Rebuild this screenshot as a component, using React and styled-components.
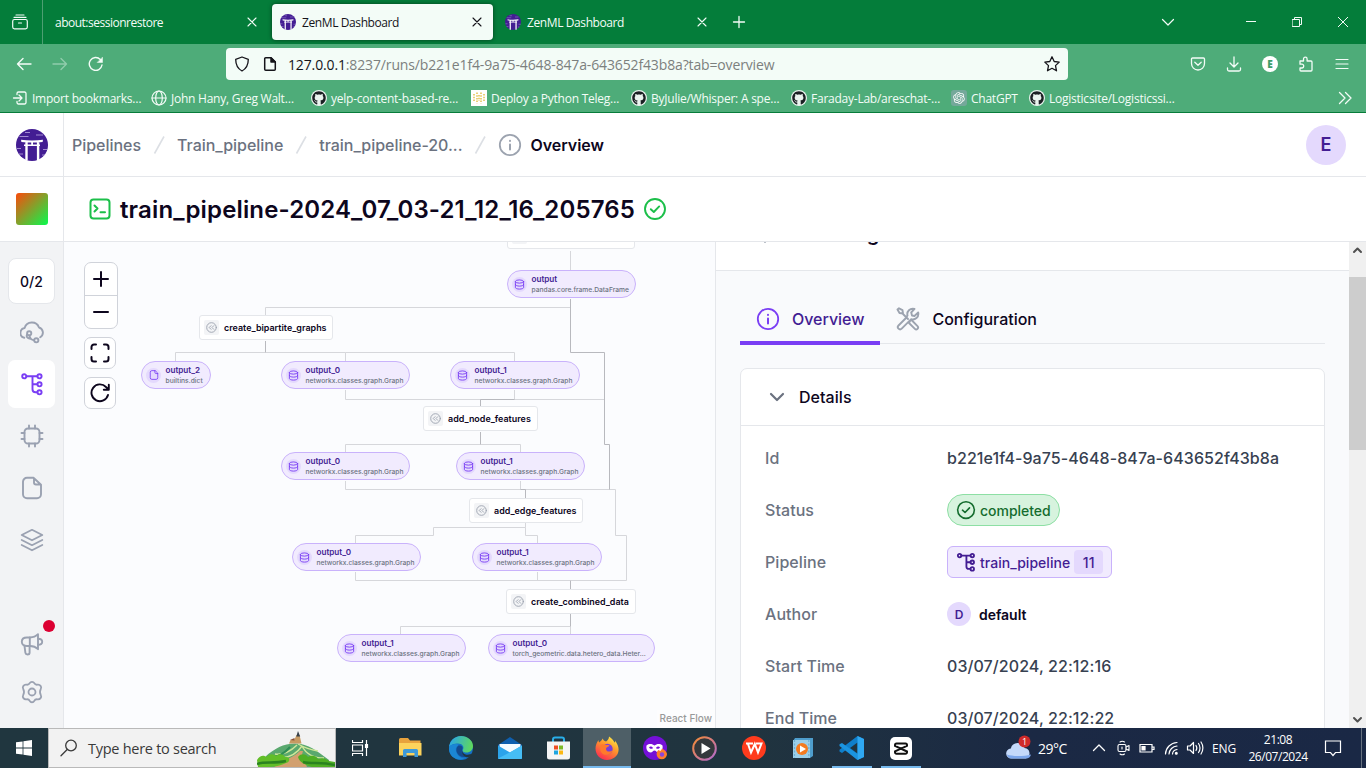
import React from "react";
import styled, { createGlobalStyle, css } from "styled-components";
import { FaGithub } from "react-icons/fa";
import { RiOpenaiFill } from "react-icons/ri";

const GlobalStyle = createGlobalStyle`
  *, *::before, *::after { box-sizing: border-box; }
  body { margin: 0; overflow: hidden; }
  svg { display: block; flex: none; }
`;

const c = {
  line: "#e5e7eb",
  ink: "#0d061d",
  muted: "#6b7280",
  icon: "#9ca3af",
  purple: "#7a3ef4",
  deep: "#431d93",
  lilac: "#e4d9fd",
  pale: "#f1ebfe",
  lilacLine: "#c9b2fb",
  green: "#1cbf4a",
};

const Screen = styled.div`
  width: 1366px;
  height: 768px;
  display: flex;
  flex-direction: column;
  overflow: hidden;
  font-family: Inter, "Liberation Sans", sans-serif;
`;

/* ---------- Browser chrome ---------- */

const Chrome = styled.header`
  flex: none;
  height: 113px;
  background: #4eac79;
  border-bottom: 1px solid #077c3a;
  font-family: "Open Sans", "Noto Sans", sans-serif;
  font-size: 12px;
  color: #f3fcf7;
`;

const TabStrip = styled.div`
  display: flex;
  align-items: center;
  height: 44px;
  background: #047d3a;
`;

const ArchiveButton = styled.div`
  width: 43px;
  height: 44px;
  display: flex;
  align-items: center;
  padding-left: 12px;
  border-right: 1px solid #4d9f72;
`;

const Tab = styled.div`
  display: flex;
  align-items: center;
  gap: 6px;
  width: ${(p) => p.$width}px;
  height: 36px;
  padding: 0 8px 0 ${(p) => (p.$plain ? 12 : 8)}px;
  margin-right: 4px;
  border-radius: 4px;
  letter-spacing: ${(p) => (p.$plain ? -0.5 : -0.4)}px;
  ${(p) =>
    p.$active &&
    css`
      background: #f3fcf7;
      color: #15141a;
      box-shadow: 0 0 4px rgba(0, 0, 0, 0.5);
    `}
`;

const TabTitle = styled.span`
  flex: 1;
  padding-top: 2px;
  line-height: 18px;
  white-space: nowrap;
`;

const WindowCell = styled.div`
  display: flex;
  align-items: center;
  justify-content: center;
  width: ${(p) => p.$width}px;
  height: 44px;
  margin-right: ${(p) => p.$after || 0}px;
`;

const Spacer = styled.div`
  flex: 1;
`;

const Toolbar = styled.div`
  display: flex;
  align-items: center;
  gap: 4px;
  height: 40px;
  padding-left: 8px;
`;

const ToolButton = styled.div`
  display: flex;
  align-items: center;
  justify-content: center;
  width: 32px;
  height: 32px;
  opacity: ${(p) => (p.$dim ? 0.4 : 1)};
`;

const UrlField = styled.div`
  display: flex;
  align-items: center;
  gap: 12px;
  width: 842px;
  height: 32px;
  margin: 0 110px;
  padding: 0 8px;
  border-radius: 4px;
  background: #f3fcf7;
  color: #15141a;
`;

const Url = styled.span`
  flex: 1;
  margin-left: -2px;
  padding-top: 1px;
  font-size: 14px;
  letter-spacing: -0.14px;
  white-space: nowrap;
  color: #7c807e;
`;

const Host = styled.span`
  color: #15141a;
`;

const AccountDot = styled.span`
  width: 16px;
  height: 16px;
  border-radius: 50%;
  background: #fff;
  color: #3f9d6b;
  font-size: 10px;
  font-weight: 800;
  line-height: 16px;
  text-align: center;
`;

const Bookmarks = styled.div`
  display: flex;
  align-items: center;
  height: 28px;
  padding-left: 12px;
`;

const Bookmark = styled.div`
  display: flex;
  align-items: center;
  gap: 4px;
  width: ${(p) => p.$width}px;
  letter-spacing: -0.24px;
  white-space: nowrap;
`;

const GithubBadge = styled.span`
  display: flex;
  align-items: center;
  justify-content: center;
  width: 16px;
  height: 16px;
  border-radius: 50%;
  background: #eaf3ee;
  color: #1b1f23;
  font-size: 14px;
`;

const GptBadge = styled(GithubBadge)`
  border-radius: 3px;
  background: #74a89a;
  color: #fff;
`;

const PythonBadge = styled(GithubBadge)`
  border-radius: 0;
  background: #fff;
`;

/* ---------- Application frame ---------- */

const Frame = styled.div`
  flex: 1;
  min-height: 0;
  display: flex;
  background: #fff;
`;

const Sidebar = styled.aside`
  flex: none;
  width: 64px;
  display: flex;
  flex-direction: column;
  border-right: 1px solid ${c.line};
  background: #f2f3f5;
`;

const BrandCell = styled.div`
  flex: none;
  height: ${(p) => p.$height}px;
  padding: 16px 0 0 16px;
  background: #fff;
  border-bottom: 1px solid ${c.line};
`;

const Workspace = styled.div`
  width: 32px;
  height: 32px;
  border-radius: 3px;
  background: linear-gradient(135deg, #fc4a0b 0%, #07fb4d 100%);
`;

const Nav = styled.nav`
  flex: 1;
  display: flex;
  flex-direction: column;
  gap: 4px;
  padding: 16px 8px 12px;
`;

const Progress = styled.div`
  height: 46px;
  border: 1px solid ${c.line};
  border-radius: 8px;
  background: #fff;
  color: ${c.ink};
  font-size: 14px;
  font-weight: 500;
  line-height: 46px;
  text-align: center;
`;

const NavItem = styled.div`
  position: relative;
  display: flex;
  align-items: center;
  height: 48px;
  padding-left: 12px;
  border-radius: 7px;
  background: ${(p) => (p.$active ? "#fff" : "transparent")};
  color: ${(p) => (p.$active ? c.purple : "#9aa1b1")};
`;

const Footer = styled.div`
  margin-top: auto;
`;

const NewsDot = styled.span`
  position: absolute;
  top: 0;
  right: 0;
  width: 12px;
  height: 12px;
  border-radius: 50%;
  background: #dc0032;
`;

const Main = styled.main`
  flex: 1;
  min-width: 0;
  display: flex;
  flex-direction: column;
`;

const Breadcrumbs = styled.div`
  flex: none;
  display: flex;
  align-items: center;
  gap: 8px;
  height: 64px;
  padding: 0 20px 0 8px;
  border-bottom: 1px solid ${c.line};
  font-size: 16px;
  font-weight: 500;
  letter-spacing: -0.03px;
  color: ${c.muted};
`;

const Crumb = styled.span`
  white-space: nowrap;
  ${(p) =>
    p.$current &&
    css`
      color: ${c.ink};
      font-weight: 600;
    `}
`;

const Avatar = styled.span`
  display: inline-flex;
  align-items: center;
  justify-content: center;
  width: ${(p) => p.$size}px;
  height: ${(p) => p.$size}px;
  border-radius: 50%;
  background: ${c.lilac};
  color: ${c.deep};
  font-size: ${(p) => p.$font}px;
  font-weight: 600;
`;

const TitleBar = styled.div`
  flex: none;
  display: flex;
  align-items: center;
  gap: 8px;
  height: 65px;
  padding-left: 24px;
  border-bottom: 1px solid ${c.line};
`;

const RunTitle = styled.h1`
  margin: 0;
  padding-top: 2px;
  font-size: 24px;
  font-weight: 600;
  line-height: 30px;
  letter-spacing: 0.145px;
  color: ${c.ink};
`;

const Content = styled.div`
  flex: 1;
  min-height: 0;
  display: flex;
`;

/* ---------- Pipeline graph ---------- */

const Canvas = styled.section`
  position: relative;
  flex: none;
  width: 651px;
  overflow: hidden;
  background: #fbfcfe;
`;

const Edges = styled.svg`
  position: absolute;
  inset: 0;
`;

const placed = css`
  position: absolute;
  left: ${(p) => p.$x - 64}px;
  top: ${(p) => p.$y - 242}px;
  width: ${(p) => p.$w}px;
  display: flex;
  align-items: center;
  white-space: nowrap;
`;

const Step = styled.div`
  ${placed}
  height: 25px;
  padding-left: 4px;
  gap: 5px;
  border: 1px solid ${c.line};
  border-radius: 3px;
  background: #fff;
  color: ${c.ink};
  font-size: 8.95px;
  font-weight: 600;
`;

const StepIcon = styled.span`
  display: flex;
  align-items: center;
  justify-content: center;
  width: 15px;
  height: 15px;
  border-radius: 2px;
  background: #f3f4f6;
  color: ${c.icon};
`;

const Artifact = styled.div`
  ${placed}
  height: 28px;
  padding: 0 2px 0 4px;
  gap: 5px;
  border: 1px solid ${c.lilacLine};
  border-radius: 14px;
  background: ${c.pale};
`;

const ArtifactIcon = styled.span`
  display: flex;
  align-items: center;
  justify-content: center;
  flex: none;
  width: 15px;
  height: 15px;
  border-radius: 50%;
  background: ${c.lilac};
  color: ${c.purple};
`;

const ArtifactText = styled.span`
  min-width: 0;
  margin-left: -0.5px;
  color: ${c.muted};
  font-size: 6.7px;
  font-weight: 500;
  line-height: 10px;
`;

const ArtifactName = styled.span`
  display: block;
  color: ${c.deep};
  font-size: 8.15px;
  font-weight: 600;
  line-height: 11px;
`;

const Controls = styled.div`
  position: absolute;
  left: 20px;
  top: 20px;
  display: flex;
  flex-direction: column;
  gap: 8px;
  color: ${c.ink};
`;

const ControlGroup = styled.div`
  width: ${(p) => p.$width}px;
  border: 1px solid #d0d3da;
  border-radius: 7px;
  background: #fff;
  overflow: hidden;
`;

const Control = styled.div`
  display: flex;
  align-items: center;
  justify-content: center;
  height: ${(p) => p.$height}px;
  & + & {
    border-top: 1px solid #d0d3da;
  }
`;

const Attribution = styled.div`
  position: absolute;
  right: 0;
  bottom: 0;
  padding: 2px 3px 4px;
  background: #fdfdfe;
  color: #999;
  font-size: 10px;
  font-weight: 500;
  line-height: 12px;
`;

/* ---------- Run details ---------- */

const Panel = styled.section`
  flex: 1;
  min-width: 0;
  display: flex;
  flex-direction: column;
  overflow: hidden;
  border-left: 1px solid ${c.line};
  background: #f9fafc;
`;

const PanelHeader = styled.div`
  flex: none;
  display: flex;
  align-items: flex-end;
  gap: 14px;
  height: 29px;
  padding: 0 0 22px 37px;
  overflow: hidden;
  border-bottom: 1px solid ${c.line};
  background: #fff;
  color: ${c.icon};
`;

const PanelTitle = styled.h2`
  margin: 0;
  color: ${c.ink};
  font-size: 20px;
  font-weight: 600;
  line-height: 28px;
  letter-spacing: -0.1px;
`;

const PanelBody = styled.div`
  padding: 24px 24px 0;
`;

const TabRow = styled.div`
  display: flex;
  height: 49px;
  border-bottom: 1px solid ${c.line};
`;

const PanelTab = styled.div`
  display: flex;
  align-items: center;
  gap: 12px;
  flex: none;
  height: 50px;
  padding: 2px 16px 0;
  font-size: 16px;
  font-weight: 500;
  letter-spacing: -0.02px;
  color: ${(p) => (p.$active ? c.deep : c.ink)};
  border-bottom: 4px solid ${(p) => (p.$active ? c.purple : "transparent")};
  svg {
    color: ${(p) => (p.$active ? c.purple : c.icon)};
  }
`;

const Card = styled.div`
  height: 400px;
  margin-top: 24px;
  border: 1px solid ${c.line};
  border-radius: 7px;
  background: #fff;
`;

const CardHeader = styled.div`
  display: flex;
  align-items: center;
  gap: 10px;
  height: 57px;
  padding-left: 24px;
  border-bottom: 1px solid ${c.line};
  color: ${c.ink};
  font-size: 16px;
  font-weight: 500;
  letter-spacing: 0.05px;
  svg {
    color: ${c.muted};
  }
`;

const Rows = styled.dl`
  margin: 0;
  padding: 6px 24px;
`;

const Row = styled.div`
  display: flex;
  align-items: center;
  height: 52px;
  font-size: 16px;
  font-weight: 500;
`;

const Key = styled.dt`
  width: 182px;
  letter-spacing: 0.06px;
  color: ${c.muted};
`;

const Value = styled.dd`
  display: flex;
  align-items: center;
  margin: 0;
  color: #374151;
  letter-spacing: 0.08px;
  white-space: nowrap;
`;

const StatusPill = styled.span`
  display: flex;
  align-items: center;
  gap: 4px;
  height: 32px;
  padding: 0 8px;
  border: 1px solid #8ddfa4;
  border-radius: 16px;
  background: #d7f3de;
  color: #146c2e;
  font-size: 14px;
  font-weight: 500;
  letter-spacing: -0.02px;
`;

const PipelinePill = styled(StatusPill)`
  border-color: ${c.lilacLine};
  border-radius: 6px;
  background: ${c.pale};
  color: ${c.deep};
  letter-spacing: 0.03px;
`;

const Version = styled.span`
  width: 29px;
  height: 24px;
  border-radius: 4px;
  background: ${c.lilac};
  line-height: 25px;
  text-align: center;
`;

const AuthorName = styled.span`
  margin-left: 8px;
  color: ${c.ink};
  font-size: 14px;
  font-weight: 600;
  letter-spacing: -0.03px;
`;

const Scrollbar = styled.div`
  flex: none;
  width: 17px;
  display: flex;
  flex-direction: column;
  align-items: center;
  background: #f0f0f0;
  color: #505050;
`;

const ScrollArrow = styled.div`
  display: flex;
  align-items: center;
  justify-content: center;
  height: 17px;
  width: 17px;
`;

const Thumb = styled.div`
  width: 17px;
  height: 173px;
  margin: 18px 0 auto;
  background: #cdcdcd;
`;

/* ---------- Taskbar ---------- */

const Taskbar = styled.footer`
  flex: none;
  display: flex;
  height: 40px;
  background: linear-gradient(90deg, #20363f 0%, #20343f 55%, #1b2944 75%, #1a2845 100%);
  color: #fff;
  font-family: "Open Sans", "Noto Sans", sans-serif;
  font-size: 12px;
`;

const StartButton = styled.div`
  display: flex;
  align-items: center;
  justify-content: center;
  width: 48px;
`;

const SearchBox = styled.div`
  display: flex;
  align-items: center;
  width: 288px;
  padding-left: 11px;
  border: 1px solid #b9b9b9;
  background: #f2f2f2;
  color: #3a3a3a;
  font-size: 14.5px;
  letter-spacing: -0.27px;
  white-space: nowrap;
`;

const SearchText = styled.span`
  flex: 1;
  margin-left: 10px;
`;

const TaskButton = styled.div`
  display: flex;
  align-items: center;
  justify-content: center;
  width: ${(p) => p.$width || 49}px;
  height: 40px;
`;

const RunningButton = styled(TaskButton)`
  width: 40px;
  margin: 0 4.5px;
  border-bottom: 2px solid #76b9ed;
  padding-top: 2px;
`;

const FocusedButton = styled(TaskButton)`
  width: 48px;
  background: #4e5f67;
  border-bottom: 2px solid #76b9ed;
  padding-top: 2px;
`;

const Tray = styled.div`
  display: flex;
  align-items: center;
  margin-left: auto;
`;

const TrayItem = styled.div`
  display: flex;
  align-items: center;
  justify-content: center;
  width: ${(p) => p.$width}px;
  height: 40px;
  letter-spacing: -0.2px;
  white-space: nowrap;
`;

const Temperature = styled.span`
  width: 50px;
  padding-left: 6px;
  font-size: 14px;
  letter-spacing: -0.5px;
`;

const Clock = styled.div`
  width: 82px;
  text-align: center;
  line-height: 17px;
  letter-spacing: -0.45px;
`;

const DesktopEdge = styled.div`
  width: 5px;
  height: 40px;
  margin-left: 14px;
  border-left: 1px solid #66717f;
`;

/* ---------- Icons ---------- */

const Line = ({ size = 24, box = 24, width = 1.8, children, ...rest }) => (
  <svg
    width={size}
    height={size}
    viewBox={`0 0 ${box} ${box}`}
    fill="none"
    stroke="currentColor"
    strokeWidth={width}
    strokeLinecap="round"
    strokeLinejoin="round"
    {...rest}
  >
    {children}
  </svg>
);

const Torii = ({ size }) => (
  <svg width={size} height={size} viewBox="0 0 32 32">
    <circle cx="16" cy="16" r="16" fill="#431d93" />
    <path d="M5 10.700c7 .9 15 .9 22 0l-.4 2.300c-7 .8-14.200.8-21.200 0zM8 15.500h16v1.500H8zM9.300 13h2.400v18.300H9.300zM20.900 13h2.400v18.300h-2.400zM15.200 13h1.800v2.500h-1.800z" fill="#fff" />
    <path d="M9 3.500h5M3.500 7.500h9M20 6h7M1 19.500h4M27 20.500h4.500M3 25h4M26 26h3" stroke="#cbbcee" strokeWidth=".7" />
  </svg>
);

const Close = () => (
  <Line size={16} box={16} width={1.1}>
    <path d="M4 4l8 8M12 4l-8 8" />
  </Line>
);

const PipelineIcon = ({ size, width = 1.9 }) => (
  <Line size={size} width={width}>
    <circle cx="4.300" cy="4.300" r="2.100" />
    <circle cx="19.500" cy="4.300" r="2.100" />
    <circle cx="19.500" cy="12.300" r="2.100" />
    <circle cx="19.500" cy="20.300" r="2.100" />
    <path d="M6.400 4.300h11M12.500 4.300v13a3 3 0 0 0 3 3h1.900M12.500 12.300h4.900" />
  </Line>
);

const CheckCircle = ({ size, ...rest }) => (
  <Line size={size} width={1.9} {...rest}>
    <circle cx="12" cy="12" r="10" />
    <path d="M7.800 12.200l3 2.800 5.400-5.600" />
  </Line>
);

const InfoIcon = (props) => (
  <Line {...props}>
    <circle cx="12" cy="12" r="10.200" />
    <path d="M12 11.500v5M12 7.700v.2" strokeWidth="2" />
  </Line>
);

const Slash = () => (
  <svg width="20" height="20" viewBox="0 0 20 20">
    <path d="M15 1.500L5.500 18.500" stroke="#dcdfe4" strokeWidth="1.600" />
  </svg>
);

const DatabaseIcon = () => (
  <Line size={11} width={2}>
    <ellipse cx="12" cy="5.500" rx="9" ry="3.500" />
    <path d="M3 5.500v13c0 2 4 3.500 9 3.500s9-1.500 9-3.500v-13M3 12c0 2 4 3.500 9 3.500s9-1.500 9-3.500" />
  </Line>
);

const FileIcon = ({ size, width }) => (
  <Line size={size} width={width}>
    <path d="M14 1.500H7a4 4 0 0 0-4 4v13a4 4 0 0 0 4 4h10a4 4 0 0 0 4-4V8.500zM14 1.500v4a3 3 0 0 0 3 3h4" />
  </Line>
);

const RewindIcon = () => (
  <Line size={11} width={2}>
    <circle cx="12" cy="12" r="10.500" />
    <path d="M11 8l-4 4 4 4M17 8l-4 4 4 4" />
  </Line>
);

const navIcons = {
  stacks: (
    <Line width={1.900}>
      <path d="M4.300 17.800A5 5 0 0 1 4.600 8 7.600 7.600 0 0 1 19 7.500a5.300 5.300 0 0 1 1.200 9.700" />
      <circle cx="9.200" cy="13.300" r="2.100" />
      <circle cx="16.300" cy="20.300" r="2.100" />
      <path d="M7 14.500c-1 2 0 3.500 3.500 4.300M9.500 15.500c.3 2.500 1.500 4.500 4.600 4.800" />
    </Line>
  ),
  pipelines: <PipelineIcon size={24} />,
  models: (
    <Line width={1.900}>
      <rect x="4.500" y="4.500" width="15" height="15" rx="3.500" />
      <path d="M9 4.500V1.500M15 4.500V1.500M9 22.500v-3M15 22.500v-3M4.500 9h-3M4.500 15h-3M22.500 9h-3M22.500 15h-3" />
    </Line>
  ),
  artifacts: (
    <Line width={1.9}>
      <path d="M13.500 1.800H7a4 4 0 0 0-4 4v12.400a4 4 0 0 0 4 4h10a4 4 0 0 0 4-4V8.800zM14 2.200v4.300a2 2 0 0 0 2 2h4.500" />
    </Line>
  ),
  components: (
    <Line width={1.8}>
      <path d="M12 1.800L22.300 7 12 12.300 1.700 7zM1.700 12L12 17.200 22.300 12M1.700 17L12 22.300 22.300 17" />
    </Line>
  ),
};

const MegaphoneIcon = () => (
  <Line width={1.9}>
    <path d="M7 5.500h3c3 0 6-1.200 8-3.300v15c-2-2-5-3.200-8-3.200H7C4 14 1.800 12.500 1.800 9.800S4 5.500 7 5.500z" />
    <path d="M18 6.800c2.500 0 4.200 1.200 4.200 3s-1.700 3-4.200 3M9.800 5.500v8.500M4.500 13.800l.9 7c.3 2.200 4 2.200 4.200 0V14" />
  </Line>
);

const SettingsIcon = () => (
  <Line width={1.8}>
    <circle cx="12" cy="12" r="3.500" />
    <path d="M9.700 3.200c1-1.900 3.600-1.900 4.600 0 .6 1.200 1.900 1.700 3.200 1.500 2.600-.4 4.500 2 3.300 4.200-.8 1.500-.8 4.700 0 6.200 1.200 2.200-.7 4.600-3.300 4.200-1.300-.2-2.600.3-3.200 1.500-1 1.900-3.600 1.900-4.600 0-.6-1.200-1.900-1.700-3.200-1.500-2.600.4-4.500-2-3.300-4.200.8-1.500.8-4.700 0-6.200C2 6.700 3.900 4.300 6.500 4.700c1.300.2 2.600-.3 3.200-1.500z" />
  </Line>
);

const ToolsIcon = () => (
  <Line width={1.9}>
    <path d="M6 6l6 6M1.500 2.500L3 1.300l3.500 1.800L7 6.500 3.500 6zM14 14l1.500-1 6 6.200a1.800 1.800 0 0 1-2.600 2.600L13 16zM9.500 11.500l-7 7a2.200 2.200 0 0 0 3.200 3.200l9.500-9.500c3.800 1 8-1.700 7-6.700L18.500 9 16 8.500 15.200 5.500l3.300-3.600c-4.500-1.100-8 2.500-7 6.600z" />
  </Line>
);

/* ---------- Taskbar application icons ---------- */

const Hills = () => (
  <svg width="78" height="38" viewBox="0 0 78 38">
    <path d="M8 28C18 19 26 15 38 14.500c14 0 22 8 34 16.500v7H8z" fill="#5aa86e" />
    <path d="M18 25c8 1 16-3 22-9M25 29c9-1 16-6 20-12M45 17c4 8 12 12 22 12M41 15c7 4 14 6 20 7" stroke="#cfe69a" strokeWidth="1.400" fill="none" />
    <path d="M12 28c8 1 14-2 21-10" stroke="#2f8d56" strokeWidth="2" fill="none" />
    <path d="M43 22c-4 4-9 6-14 9l-12 7h33c-2-6-7-8-4-16z" fill="#d2a06f" />
    <path d="M0 31c3-5 7-5 9-3 4-4 8-3 10-1 3-3 8-2 9 1 5-1 6 5 1 6-8 4-14 4-28 4z" fill="#62be28" />
    <path d="M41 28c3-4 8-3 10 0 3-2 8-2 10 2 5-2 9 0 11 2l6 1v5H55c-7-2-13-5-14-10z" fill="#4fae24" />
    <path d="M0 35c9-3 16 0 29-3M46 33c8 2 18 0 32 3" stroke="#2b8320" strokeWidth="2.500" fill="none" />
    <path d="M32 14.500l1.500-3.500 4-.5 2-4.500h3l2 8.500z" fill="#c79a62" />
    <path d="M39.300 7.500L41 2l2.200 5.500z" fill="#36404a" />
    <path d="M33 11l4.500-2v2.500z" fill="#8a4f35" />
  </svg>
);

const FolderApp = () => (
  <svg width="23" height="22" viewBox="0 0 23 22">
    <path d="M0 2.500A1.500 1.500 0 0 1 1.500 1H9l2 2.500h10.500v6H0z" fill="#e8a33d" />
    <path d="M0 6h22.500v12.500H0z" fill="#fcd35c" />
    <path d="M4 20v-6.500A1.500 1.500 0 0 1 5.500 12h12a1.500 1.500 0 0 1 1.500 1.500V20h-3.500v-4h-8v4z" fill="#3f9ad8" />
  </svg>
);

const EdgeApp = () => (
  <svg width="24" height="24" viewBox="0 0 24 24">
    <defs>
      <linearGradient id="edgeTop" x1="0" x2="1" y1=".3" y2=".5">
        <stop offset="0" stopColor="#2aa6e8" />
        <stop offset="1" stopColor="#5fd85c" />
      </linearGradient>
    </defs>
    <circle cx="12" cy="12" r="12" fill="#1470c4" />
    <path d="M0 11.500C.5 5 5.500 0 12 0s12 4.500 12 10c0 4-3 6.500-6.500 6.500-3 0-4.500-1.200-3.500-3 1.500-3-1-6-5-6S1 9 0 11.500z" fill="url(#edgeTop)" />
    <path d="M7 12c-1 5 3 10.500 9 10.500C7 26-1.500 19 .2 11 2.500 7.500 8 7.500 10 9c-1.500.5-2.500 1.500-3 3z" fill="#1b86d4" />
    <path d="M9.500 9.500C5 13 8 21 15 21c3 0 5.500-1 7-3-5 2-9 .5-9-3.500 0-1 .6-1.700.6-2.700 0-1.500-1.600-2.800-4.100-2.300z" fill="#134a8e" />
    <path d="M13.200 14c0 4.500 5 6 9.500 3.700 1.500-1 2.300.5 1.300 1.800L20 21c-4 1-7.500-2.500-6.800-7z" fill="#20363f" />
  </svg>
);

const MailApp = () => (
  <svg width="24" height="24" viewBox="0 0 24 24">
    <path d="M0 9L12 1l12 8v3H0z" fill="#0f5fae" />
    <path d="M1.500 8h21v10h-21z" fill="#f5fbff" />
    <path d="M0 9.500l12 7 12-7V22a1 1 0 0 1-1 1H1a1 1 0 0 1-1-1z" fill="#2ba3ea" />
    <path d="M0 22.500L13 15.700 24 9.500V22a1 1 0 0 1-1 1H1z" fill="#46bdf5" />
  </svg>
);

const StoreApp = () => (
  <svg width="23" height="24" viewBox="0 0 23 24">
    <path d="M6 7V3.500A2 2 0 0 1 8 1.500h7a2 2 0 0 1 2 2V7" fill="none" stroke="#29aee8" strokeWidth="2" />
    <path d="M0 5.500h23V21a2.500 2.500 0 0 1-2.500 2.500h-18A2.500 2.500 0 0 1 0 21z" fill="#f5f5f5" />
    <path d="M7 9.500h4v4H7z" fill="#f04e23" />
    <path d="M12 9.500h4v4h-4z" fill="#7eba28" />
    <path d="M7 14.500h4v4H7z" fill="#1ea5e0" />
    <path d="M12 14.500h4v4h-4z" fill="#fcb813" />
  </svg>
);

const FirefoxShape = ({ size }) => (
  <svg width={size} height={size} viewBox="0 0 24 24">
    <defs>
      <linearGradient id="fox" x1=".8" y1="0" x2=".2" y2="1">
        <stop offset="0" stopColor="#fff14a" />
        <stop offset=".4" stopColor="#ff9a2b" />
        <stop offset="1" stopColor="#fb2354" />
      </linearGradient>
    </defs>
    <path d="M14 .5c3 2 4.500 4 5.500 6 1-.3.500-2 .500-2 3 4 4.500 8 3 12.500C21.500 21 17 24 12 24 5.500 24 .5 19 .5 12.500.5 9 2 6 3.500 4c0 1 .3 2 .8 2.500C5.500 5 7 4.500 7.500 2.500 8.500 4 9 5 11 5.500c1.500-1 3-2.500 3-5z" fill="url(#fox)" />
    <circle cx="12.500" cy="13" r="5.200" fill="#7a3fd6" />
    <path d="M5 9.500c2-2 4-1.500 6-.5 1.500 0 3 0 3.500.5-1 1.500-3.500 1.500-3.500 3.500 0 3 4.500 3.500 6.500 1-1 5.500-9.500 7-12 1z" fill="#ff7a2b" />
  </svg>
);

const PrivateApp = () => (
  <svg width="25" height="24" viewBox="0 0 25 24">
    <circle cx="12" cy="12" r="12" fill="#7410d8" />
    <path d="M3.500 9.500c3-2.500 6-1.500 8 0 2-1.500 5-2.500 8 0 .8 4-1.500 7-4 7-2 0-2.500-2-4-2s-2 2-4 2c-2.500 0-4.800-3-4-7z" fill="#fff" />
    <path d="M6 11.500c1-1.500 3-1.200 4 .5-1 1.200-3 1.200-4-.5zM13 12c1-1.700 3-2 4-.5-1 1.700-3 1.700-4 .5z" fill="#7410d8" />
    <path d="M19 12.500c1 1 4.500 2 5 5.500a5.200 5.200 0 0 1-10.400 0c0-1.500.8-3 1.800-4 .8.8 2 .8 2.600.5z" fill="#ff7b2c" />
    <circle cx="19" cy="18.500" r="2.200" fill="#8b45dc" />
  </svg>
);

const PlayerApp = () => (
  <svg width="25" height="25" viewBox="0 0 25 25">
    <defs>
      <linearGradient id="ring" x1="0" y1="0" x2="1" y2="1">
        <stop offset="0" stopColor="#f58b32" />
        <stop offset="1" stopColor="#b16ad0" />
      </linearGradient>
    </defs>
    <circle cx="12.500" cy="12.500" r="11.300" fill="#33383c" stroke="url(#ring)" strokeWidth="2" />
    <path d="M9.500 7l9 5.500-9 5.500z" fill="#fff" />
  </svg>
);

const WpsApp = () => (
  <svg width="24" height="24" viewBox="0 0 24 24">
    <circle cx="12" cy="12" r="12" fill="#ff3b1d" />
    <path d="M4 7.500h7M6 8l3 8.500 3.800-8.500 3.200 8.500L19.500 7.500H14" fill="none" stroke="#fff" strokeWidth="2" />
  </svg>
);

const MoviesApp = () => (
  <svg width="22" height="22" viewBox="0 0 22 22">
    <path d="M3 1h18v18l-3 2V4H1z" fill="#4e9dcc" />
    <path d="M1 3h17v18H1z" fill="#9ccfe9" />
    <path d="M2.500 3v18M16.800 3v18" stroke="#6fb0d4" strokeWidth="1.200" strokeDasharray="2 1.500" />
    <circle cx="10" cy="12" r="6" fill="#f47b20" />
    <path d="M8 8.500l6 3.500-6 3.500z" fill="#fff" />
  </svg>
);

const CodeApp = () => (
  <svg width="25" height="24" viewBox="0 0 25 24">
    <path d="M18.500 0L25 3v18l-6.500 3L7.500 13.500 3 17l-2.500-1.500v-1.700L18.500 0z" fill="#0f7fcb" />
    <path d="M18.500 24L.5 10V8.200L3 7l15.500 11z" fill="#1b94e0" />
    <path d="M18.500 6.500v11L11 12z" fill="#20343f" />
    <path d="M18.500 0L25 3v18l-6.500 3z" fill="#2fa8f2" />
  </svg>
);

const CapcutApp = () => (
  <svg width="22" height="23" viewBox="0 0 22 23">
    <rect width="22" height="23" rx="5" fill="#fff" />
    <path d="M17 9.500V8a1.500 1.500 0 0 0-1.500-1.500h-9A1.500 1.500 0 0 0 5 8v.8l12 5.700v.8a1.500 1.500 0 0 1-1.500 1.500h-9A1.500 1.500 0 0 1 5 15.300v-1l12-5.500" fill="none" stroke="#111" strokeWidth="2" />
  </svg>
);

const WeatherIcon = () => (
  <svg width="26" height="26" viewBox="0 0 26 26">
    <path d="M5.500 23.500a5 5 0 0 1-.7-10A7.200 7.200 0 0 1 18.600 13a5.400 5.400 0 0 1 1.200 10.500z" fill="#c4d9fa" />
    <path d="M5.500 23.500a5 5 0 0 1-4.500-4c5 2 17 2 24 0a5.400 5.400 0 0 1-5 4z" fill="#7ca7ec" />
    <circle cx="18.500" cy="6.500" r="6" fill="#cf2a2a" />
    <text x="18.500" y="9.800" fontSize="9" textAnchor="middle" fill="#fff">1</text>
  </svg>
);

/* ---------- Data ---------- */

const bookmarks = [
  [139, "import", "Import bookmarks…"],
  [160, "globe", "John Hany, Greg Walt…"],
  [160, "github", "yelp-content-based-re…"],
  [160, "python", "Deploy a Python Teleg…"],
  [160, "github", "ByJulie/Whisper: A spe…"],
  [160, "github", "Faraday-Lab/areschat-…"],
  [78, "gpt", "ChatGPT"],
  [160, "github", "Logisticsite/Logisticssi…"],
];

const bookmarkIcon = {
  import: (
    <Line size={16} box={16} width={1.3}>
      <path d="M1.500 8h8M7 5l3 3-3 3M5 4.500v-1A1.500 1.500 0 0 1 6.500 2h6A1.500 1.500 0 0 1 14 3.500v9a1.500 1.500 0 0 1-1.500 1.500h-6A1.500 1.500 0 0 1 5 12.500v-1" />
    </Line>
  ),
  globe: (
    <Line size={16} box={16} width={1.200}>
      <circle cx="8" cy="8" r="7" />
      <ellipse cx="8" cy="8" rx="3.300" ry="7" />
      <path d="M1 8h14" />
    </Line>
  ),
  github: <GithubBadge><FaGithub /></GithubBadge>,
  gpt: <GptBadge><RiOpenaiFill /></GptBadge>,
  python: (
    <PythonBadge>
      <svg width="14" height="14" viewBox="0 0 14 14">
        <path d="M2 3v8M5 1.500v11M9 1.500v11M12 3v8M7 4v6" stroke="#e3c14d" strokeWidth="1.500" strokeDasharray="1.500 1.200" />
      </svg>
    </PythonBadge>
  ),
};

const steps = [
  [507, 224, 128, ""],
  [199, 315, 134, "create_bipartite_graphs"],
  [423, 406, 115, "add_node_features"],
  [469, 498, 114, "add_edge_features"],
  [506, 589, 130, "create_combined_data"],
];

const graph = "networkx.classes.graph.Graph";
const artifacts = [
  [507, 270, 129, "output", "pandas.core.frame.DataFrame"],
  [141, 361, 70, "output_2", "builtins.dict", true],
  [281, 361, 129, "output_0", graph],
  [450, 361, 130, "output_1", graph],
  [281, 452, 129, "output_0", graph],
  [456, 452, 129, "output_1", graph],
  [292, 543, 129, "output_0", graph],
  [472, 543, 130, "output_1", graph],
  [337, 634, 129, "output_1", graph],
  [488, 634, 167, "output_0", "torch_geometric.data.hetero_data.Heter..."],
];

const lightEdges = [
  "M570.500 251V270",
  "M570.500 307.500H265.500V315",
  "M265.500 352.500H175.500V361M265.500 352.500H345.500V361M345.500 352.500H514.500V361",
  "M345.500 390V399.500H604.500M514.500 390V399.500",
  "M480.500 444.500H345.500V452M480.500 444.500H520.500V452",
  "M345.500 481V489.500H615.500V535.500H626.500V580.500H570.500M520.500 481V489.500",
  "M525.500 523V527.500H433.500V535.500H355.500V543M525.500 527.500V535.500H537.500V543",
  "M355.500 572V580.500H570.500M537.500 572V580.500",
  "M570.500 626.500H400.500V634M570.500 626.500V634",
];

const darkEdges = [
  "M570.500 299V352.500H604.500V444.500H609.500V489.500",
  "M265.500 341V352.500",
  "M480.500 406V399.500H514.500",
  "M480.500 432V444.500",
  "M520.500 489.500H525.500V498",
  "M570.500 589V580.500",
  "M570.500 614V626.500",
];

/* ---------- Page ---------- */

const BrowserChrome = () => (
  <Chrome>
    <TabStrip>
      <ArchiveButton>
        <Line size={16} box={16} width={1.200}>
          <rect x=".7" y="5.500" width="14.600" height="9.300" rx="1.800" />
          <path d="M2 3.300h12M4 1h8M6.500 9h3" />
        </Line>
      </ArchiveButton>
      <Tab $width={225} $plain><TabTitle>about:sessionrestore</TabTitle><Close /></Tab>
      <Tab $width={221} $active><Torii size={16} /><TabTitle>ZenML Dashboard</TabTitle><Close /></Tab>
      <Tab $width={221}><Torii size={16} /><TabTitle>ZenML Dashboard</TabTitle><Close /></Tab>
      <WindowCell $width={34}>
        <Line size={16} box={16} width={1.300}><path d="M8 2.500v11M2.500 8h11" /></Line>
      </WindowCell>
      <Spacer />
      <WindowCell $width={36} $after={42}>
        <Line size={16} box={16} width={1.200}><path d="M2.500 5.500L8 11l5.500-5.500" /></Line>
      </WindowCell>
      <WindowCell $width={46}>
        <Line size={10} box={10} width={1} strokeLinecap="butt"><path d="M0 4.500h10" /></Line>
      </WindowCell>
      <WindowCell $width={46}>
        <Line size={10} box={10} width={1} strokeLinejoin="miter"><path d="M.5 2.500h7v7h-7zM2.500 2.500v-2h7v7h-2" /></Line>
      </WindowCell>
      <WindowCell $width={46}>
        <Line size={10} box={10} width={1}><path d="M0 0l10 10M10 0L0 10" /></Line>
      </WindowCell>
    </TabStrip>

    <Toolbar>
      <ToolButton><Line size={16} box={16} width={1.400}><path d="M15 8H1.500M7 2.500L1.500 8 7 13.500" /></Line></ToolButton>
      <ToolButton $dim><Line size={16} box={16} width={1.400}><path d="M1 8h13.500M9 2.500L14.500 8 9 13.500" /></Line></ToolButton>
      <ToolButton>
        <Line size={16} box={16} width={1.400}>
          <path d="M14 9A6.400 6.400 0 1 1 12.300 3.500" />
          <path d="M14.500 1.500v5h-5z" fill="currentColor" strokeWidth=".5" />
        </Line>
      </ToolButton>
      <UrlField>
        <Line size={16} box={16} width={1.300}>
          <path d="M8 1l6.300 2.300c0 5-1.500 9.200-6.300 11.700C3.200 12.500 1.700 8.300 1.700 3.300z" />
        </Line>
        <Line size={16} box={16} width={1.500}>
          <path d="M9 1.700H3.700a1 1 0 0 0-1 1v10.600a1 1 0 0 0 1 1h8.600a1 1 0 0 0 1-1V6z" />
          <path d="M9 1.700V6h4.300z" fill="currentColor" />
        </Line>
        <Url><Host>127.0.0.1</Host>:8237/runs/b221e1f4-9a75-4648-847a-643652f43b8a?tab=overview</Url>
        <Line size={16} box={16} width={1.300}>
          <path d="M8 .8l2.200 4.700 5 .6-3.700 3.500 1 5.200L8 12.300l-4.500 2.500 1-5.200L.8 6.100l5-.6z" />
        </Line>
      </UrlField>
      <ToolButton>
        <Line size={16} box={16} width={1.300}>
          <path d="M2.500 2h11a1 1 0 0 1 1 1v4.500a6.500 6.500 0 0 1-13 0V3a1 1 0 0 1 1-1zM4.800 6.300L8 9.300l3.200-3" />
        </Line>
      </ToolButton>
      <ToolButton>
        <Line size={16} box={16} width={1.300}><path d="M8 1v9.500M4 7l4 4 4-4M1.500 12v1.500A1.500 1.500 0 0 0 3 15h10a1.500 1.500 0 0 0 1.500-1.500V12" /></Line>
      </ToolButton>
      <ToolButton><AccountDot>E</AccountDot></ToolButton>
      <ToolButton>
        <Line size={16} box={16} width={1.300}>
          <path d="M2 5h3.500V3a1.800 1.800 0 0 1 3.600 0v2H13a1 1 0 0 1 1 1v8a1 1 0 0 1-1 1H3a1 1 0 0 1-1-1v-2h1.800a1.900 1.900 0 0 0 0-3.800H2z" />
        </Line>
      </ToolButton>
      <ToolButton>
        <Line size={16} box={16} width={1.200}><path d="M2 3.500h12M2 8h12M2 12.500h12" /></Line>
      </ToolButton>
    </Toolbar>

    <Bookmarks>
      {bookmarks.map(([width, icon, label]) => (
        <Bookmark key={label} $width={width}>{bookmarkIcon[icon]}{label}</Bookmark>
      ))}
      <Spacer />
      <WindowCell $width={42}>
        <Line size={16} box={16} width={1.300}><path d="M2.500 2.500L8 8l-5.500 5.500M8.500 2.500L14 8l-5.500 5.500" /></Line>
      </WindowCell>
    </Bookmarks>
  </Chrome>
);

const SideNav = () => (
  <Sidebar>
    <BrandCell $height={64}><Torii size={32} /></BrandCell>
    <BrandCell $height={65}><Workspace /></BrandCell>
    <Nav>
      <Progress>0/2</Progress>
      {Object.entries(navIcons).map(([name, icon]) => (
        <NavItem key={name} $active={name === "pipelines"}>{icon}</NavItem>
      ))}
      <Footer>
        <NavItem><MegaphoneIcon /><NewsDot /></NavItem>
        <NavItem><SettingsIcon /></NavItem>
      </Footer>
    </Nav>
  </Sidebar>
);

const Graph = () => (
  <Canvas>
    <Edges width="651" height="486" viewBox="64 242 651 486" fill="none">
      {lightEdges.map((d) => <path key={d} d={d} stroke="#d6d7db" />)}
      {darkEdges.map((d) => <path key={d} d={d} stroke="#b8b9be" />)}
    </Edges>
    {steps.map(([x, y, w, name]) => (
      <Step key={y} $x={x} $y={y} $w={w}><StepIcon><RewindIcon /></StepIcon>{name}</Step>
    ))}
    {artifacts.map(([x, y, w, name, type, file]) => (
      <Artifact key={`${x}-${y}`} $x={x} $y={y} $w={w}>
        <ArtifactIcon>{file ? <FileIcon size={10} width={2} /> : <DatabaseIcon />}</ArtifactIcon>
        <ArtifactText><ArtifactName>{name}</ArtifactName>{type}</ArtifactText>
      </Artifact>
    ))}
    <Controls>
      <ControlGroup $width={34}>
        <Control $height={32}><Line size={18} box={18} width={2}><path d="M9 2v14M2 9h14" /></Line></Control>
        <Control $height={33}><Line size={18} box={18} width={2}><path d="M2 9h14" /></Line></Control>
      </ControlGroup>
      <ControlGroup $width={32}>
        <Control $height={30}>
          <Line size={20} box={20} width={2}>
            <path d="M1.500 6V4A2.500 2.500 0 0 1 4 1.500h2M14 1.500h2A2.500 2.500 0 0 1 18.500 4v2M18.500 14v2a2.500 2.500 0 0 1-2.500 2.500h-2M6 18.500H4A2.500 2.500 0 0 1 1.500 16v-2" />
          </Line>
        </Control>
      </ControlGroup>
      <ControlGroup $width={32}>
        <Control $height={30}>
          <Line size={20} box={20} width={1.900}>
            <path d="M18 12A8.400 8.400 0 1 1 16 4l2.700 2.700M18.800 1.800v5h-5" />
          </Line>
        </Control>
      </ControlGroup>
    </Controls>
    <Attribution>React Flow</Attribution>
  </Canvas>
);

const Details = () => (
  <Panel>
    <PanelHeader>
      <Line><path d="M12 8v10" /></Line>
      <PanelTitle>Run Insights</PanelTitle>
    </PanelHeader>
    <PanelBody>
      <TabRow>
        <PanelTab $active><InfoIcon />Overview</PanelTab>
        <PanelTab><ToolsIcon />Configuration</PanelTab>
      </TabRow>
      <Card>
        <CardHeader>
          <Line width={2.200}><path d="M6 9l6 6 6-6" /></Line>
          Details
        </CardHeader>
        <Rows>
          <Row><Key>Id</Key><Value>b221e1f4-9a75-4648-847a-643652f43b8a</Value></Row>
          <Row>
            <Key>Status</Key>
            <Value><StatusPill><CheckCircle size={20} />completed</StatusPill></Value>
          </Row>
          <Row>
            <Key>Pipeline</Key>
            <Value><PipelinePill><PipelineIcon size={20} width={2.200} />train_pipeline<Version>11</Version></PipelinePill></Value>
          </Row>
          <Row>
            <Key>Author</Key>
            <Value><Avatar $size={24} $font={12}>D</Avatar><AuthorName>default</AuthorName></Value>
          </Row>
          <Row><Key>Start Time</Key><Value>03/07/2024, 22:12:16</Value></Row>
          <Row><Key>End Time</Key><Value>03/07/2024, 22:12:22</Value></Row>
        </Rows>
      </Card>
    </PanelBody>
  </Panel>
);

const WindowsTaskbar = () => (
  <Taskbar>
    <StartButton>
      <svg width="16" height="16" viewBox="0 0 16 16">
        <path d="M0 2.300L6.600 1.400v6.200H0zM7.400 1.300L16 0v7.600H7.400zM0 8.400h6.600v6.200L0 13.700zM7.400 8.400H16V16l-8.600-1.200z" fill="#fff" />
      </svg>
    </StartButton>
    <SearchBox>
      <Line size={18} box={18} width={1.300}><circle cx="11" cy="6.500" r="5.300" /><path d="M7.200 10.500L1 16.800" /></Line>
      <SearchText>Type here to search</SearchText>
      <Hills />
    </SearchBox>
    <TaskButton>
      <Line size={18} box={18} width={1.200} strokeLinecap="butt" strokeLinejoin="miter">
        <path d="M.5 1v2.500h10V1M.5 17v-2.500h10V17M.5 6h10v6H.5zM14.500 1v16M13.500 5.500h2v3h-2z" />
      </Line>
    </TaskButton>
    <TaskButton $width={51}><FolderApp /></TaskButton>
    <TaskButton><EdgeApp /></TaskButton>
    <TaskButton><MailApp /></TaskButton>
    <TaskButton><StoreApp /></TaskButton>
    <FocusedButton><FirefoxShape size={24} /></FocusedButton>
    <TaskButton><PrivateApp /></TaskButton>
    <TaskButton><PlayerApp /></TaskButton>
    <TaskButton><WpsApp /></TaskButton>
    <TaskButton><MoviesApp /></TaskButton>
    <RunningButton><CodeApp /></RunningButton>
    <RunningButton><CapcutApp /></RunningButton>
    <Tray>
      <WeatherIcon />
      <Temperature>29°C</Temperature>
      <TrayItem $width={34}>
        <Line size={14} box={14} width={1.300}><path d="M1.500 9.500L7 4l5.500 5.500" /></Line>
      </TrayItem>
      <TrayItem $width={14}>
        <Line size={16} box={16} width={1.100}><rect x="3" y="4.500" width="8" height="7" rx="1.500" /><path d="M11 7l3-1.500v5L11 9M5 2c1.500-1 3-1 4.500 0M5 14c1.500 1 3 1 4.500 0M7 7v2" /></Line>
      </TrayItem>
      <TrayItem $width={34}>
        <Line size={16} box={16} width={1.200} strokeLinejoin="miter"><path d="M1 4.500h12v7.500H1zM13.500 7h1.500v2.500h-1.500" /><path d="M3 6.500h3V10H3z" fill="currentColor" /></Line>
      </TrayItem>
      <TrayItem $width={15}>
        <Line size={15} box={15} width={1.200}><path d="M1.500 13A12 12 0 0 1 13 1.500M5 13a8.500 8.500 0 0 1 8-8M8.500 13A5 5 0 0 1 13 8.500" /><circle cx="12.300" cy="12.300" r=".9" fill="currentColor" /></Line>
      </TrayItem>
      <TrayItem $width={32}>
        <Line size={18} box={18} width={1.200}><path d="M1.500 7h2.500l3.500-3.500v11L4 11H1.500zM10 6.500c1 1.500 1 3.500 0 5M12.500 4.500c2 2.500 2 6.500 0 9M15 3c2.500 3.500 2.500 8.500 0 12" /></Line>
      </TrayItem>
      <TrayItem $width={26}>ENG</TrayItem>
      <Clock>21:08<br />26/07/2024</Clock>
      <TrayItem $width={28}>
        <Line size={18} box={18} width={1.200} strokeLinejoin="miter"><path d="M1.500 2h15v11.500h-5L9 16.500l-2.500-3h-5z" /></Line>
      </TrayItem>
      <DesktopEdge />
    </Tray>
  </Taskbar>
);

export default function App() {
  return (
    <Screen>
      <GlobalStyle />
      <BrowserChrome />
      <Frame>
        <SideNav />
        <Main>
          <Breadcrumbs>
            <Crumb>Pipelines</Crumb>
            <Slash />
            <Crumb>Train_pipeline</Crumb>
            <Slash />
            <Crumb>train_pipeline-20...</Crumb>
            <Slash />
            <InfoIcon color={c.icon} />
            <Crumb $current>Overview</Crumb>
            <Spacer />
            <Avatar $size={40} $font={18}>E</Avatar>
          </Breadcrumbs>
          <TitleBar>
            <Line color={c.green} width={2}>
              <rect x="2.500" y="2.500" width="19" height="19" rx="3" />
              <path d="M6.500 8.500l3 3-3 3M12.500 15.300h4.500" />
            </Line>
            <RunTitle>train_pipeline-2024_07_03-21_12_16_205765</RunTitle>
            <CheckCircle size={24} color={c.green} />
          </TitleBar>
          <Content>
            <Graph />
            <Details />
            <Scrollbar>
              <ScrollArrow><Line size={11} box={11} width={2}><path d="M2 7L5.500 3.500 9 7" /></Line></ScrollArrow>
              <Thumb />
              <ScrollArrow><Line size={11} box={11} width={2}><path d="M2 4L5.500 7.500 9 4" /></Line></ScrollArrow>
            </Scrollbar>
          </Content>
        </Main>
      </Frame>
      <WindowsTaskbar />
    </Screen>
  );
}
